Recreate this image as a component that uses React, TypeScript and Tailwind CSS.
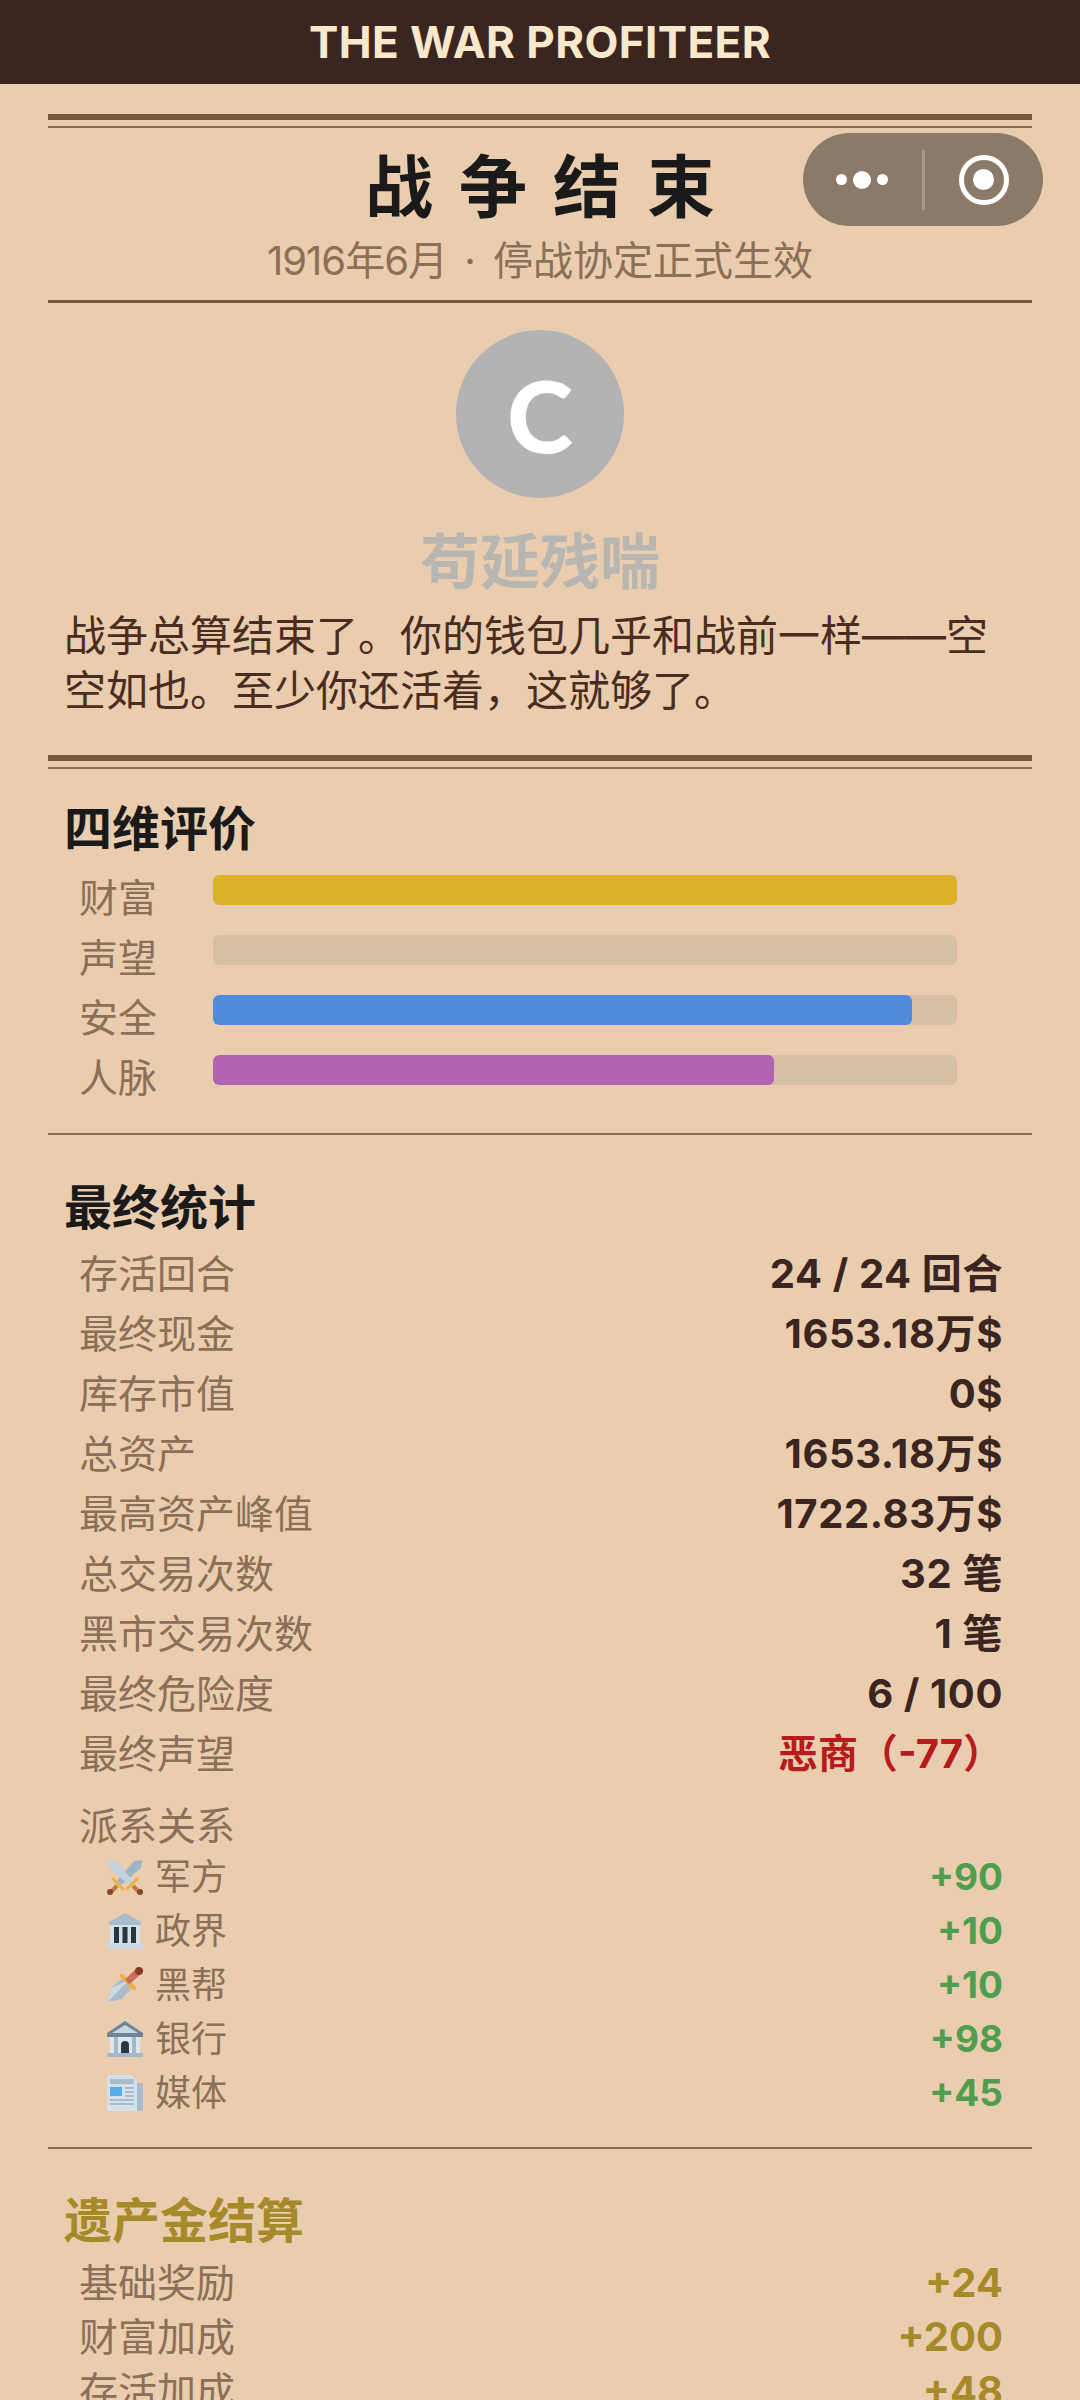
import React from 'react';

const cjk = { fontFamily: 'Inter, "Noto Sans CJK SC", sans-serif' };

const Swords = () => (
  <svg viewBox="0 0 36 36" className="w-[36px] h-[36px]">
    <path d="M35 1 L34 9 L14 26 L10 22 L27 2 Z" fill="#9fb4c4" />
    <path d="M1 1 L9 2 L26 22 L22 26 L2 9 Z" fill="#c3d2dd" />
    <path d="M6 20 L16 30 M30 20 L20 30" stroke="#f0b040" strokeWidth="3" strokeLinecap="round" />
    <path d="M10 27 L4 33 M26 27 L32 33" stroke="#c1764a" strokeWidth="4" />
    <circle cx="3" cy="33" r="3" fill="#8a4526" />
    <circle cx="33" cy="33" r="3" fill="#8a4526" />
  </svg>
);

const Classical = () => (
  <svg viewBox="0 0 36 36" className="w-[36px] h-[36px]">
    <path d="M18 0 L34 9 V12 H2 V9 Z" fill="#a9bccb" />
    <rect x="3" y="12" width="30" height="19" fill="#d5e0e8" />
    <rect x="7" y="14" width="5" height="16" fill="#2b3640" />
    <rect x="15.5" y="14" width="5" height="16" fill="#2b3640" />
    <rect x="24" y="14" width="5" height="16" fill="#2b3640" />
    <rect x="0" y="31" width="36" height="5" rx="1" fill="#ccd9e3" />
  </svg>
);

const Dagger = () => (
  <svg viewBox="0 0 36 36" className="w-[36px] h-[36px]">
    <path d="M1 35 L4 21 L18 9 L27 18 L15 32 Z" fill="#a9bccb" />
    <path d="M1 35 L4 21 L22 13 Z" fill="#ccd9e3" />
    <path d="M15 9 L27 21" stroke="#f0b040" strokeWidth="4" strokeLinecap="round" />
    <path d="M20 15 L32 4" stroke="#c9705a" strokeWidth="7" />
    <circle cx="32" cy="4" r="4" fill="#8a3d26" />
  </svg>
);

const Bank = () => (
  <svg viewBox="0 0 36 36" className="w-[36px] h-[36px]">
    <path d="M18 0 L36 12 V16 H0 V12 Z" fill="#6f8496" />
    <path d="M18 4 L31 12 H5 Z" fill="#c9d7e2" />
    <rect x="3" y="16" width="30" height="16" fill="#dce6ee" />
    <rect x="7" y="16" width="4" height="16" fill="#a5b8c7" />
    <rect x="25" y="16" width="4" height="16" fill="#a5b8c7" />
    <path d="M14 32 V24 a4 4 0 0 1 8 0 V32 Z" fill="#2b3640" />
    <rect x="0" y="32" width="36" height="4" rx="1" fill="#a5b8c7" />
  </svg>
);

const News = () => (
  <svg viewBox="0 0 36 36" className="w-[36px] h-[36px]">
    <rect x="28" y="8" width="8" height="28" rx="1" fill="#a9bccb" />
    <path d="M2 0 H24 L30 6 V36 H2 a2 2 0 0 1 -2 -2 V2 a2 2 0 0 1 2 -2 Z" fill="#d5e0e8" />
    <rect x="3" y="4" width="24" height="5" fill="#a9bccb" />
    <rect x="3" y="12" width="12" height="9" fill="#55aceb" />
    <path d="M18 13 H27 M18 17 H27 M18 21 H27 M3 25 H27 M3 29 H27" stroke="#a9bccb" strokeWidth="2" />
  </svg>
);

const DoubleRule = () => (
  <div>
    <div className="h-[6px] bg-[#76593f]" />
    <div className="h-[2px] mt-[6px] bg-[#8a6d52]" />
  </div>
);

const bars = [
  { label: '财富', value: 100, color: 'bg-[#dcb228]' },
  { label: '声望', value: 0, color: 'bg-[#d4bea3]' },
  { label: '安全', value: 94, color: 'bg-[#4f8cdb]' },
  { label: '人脉', value: 75.4, color: 'bg-[#b263b5]' },
];

const stats = [
  ['存活回合', '24 / 24 回合'],
  ['最终现金', '1653.18万$'],
  ['库存市值', '0$'],
  ['总资产', '1653.18万$'],
  ['最高资产峰值', '1722.83万$'],
  ['总交易次数', '32 笔'],
  ['黑市交易次数', '1 笔'],
  ['最终危险度', '6 / 100'],
];

const factions = [
  { icon: <Swords />, name: '军方', value: '+90' },
  { icon: <Classical />, name: '政界', value: '+10' },
  { icon: <Dagger />, name: '黑帮', value: '+10' },
  { icon: <Bank />, name: '银行', value: '+98' },
  { icon: <News />, name: '媒体', value: '+45' },
];

const legacy = [
  ['基础奖励', '+24'],
  ['财富加成', '+200'],
  ['存活加成', '+48'],
];

const App = () => {
  return (
    <div className="relative w-[1080px] h-[2400px] overflow-hidden bg-[#eacdaf]" style={cjk}>
      <header className="h-[84px] bg-[#3b2520] flex items-center justify-center">
        <span className="text-[44px] font-bold tracking-[0.4px] text-[#f8e8cc]">THE WAR PROFITEER</span>
      </header>

      {/* WeChat capsule */}
      <div className="absolute left-[803px] top-[133px] w-[240px] h-[93px] rounded-full bg-[#8c7a68] flex items-center">
        <div className="flex-1 flex items-center justify-center gap-[6px]">
          <span className="w-[11px] h-[11px] rounded-full bg-white" />
          <span className="w-[18px] h-[18px] rounded-full bg-white" />
          <span className="w-[11px] h-[11px] rounded-full bg-white" />
        </div>
        <div className="w-[3px] h-[60px] bg-[#ab9a88]" />
        <div className="flex-1 flex items-center justify-center">
          <div className="w-[50px] h-[50px] rounded-full border-[5px] border-white flex items-center justify-center">
            <div className="w-[21px] h-[21px] rounded-full bg-white" />
          </div>
        </div>
      </div>

      <main className="px-[48px] pt-[30px]">
        <DoubleRule />
        <h1 className="mt-[15px] text-center text-[68px] leading-[88px] font-bold tracking-[26px] pl-[26px] text-[#1a1a1a]">战争结束</h1>
        <p className="mt-[5px] text-center text-[40px] leading-[50px] text-[#8b6f56]">
          <span className="tracking-[-1px]">1916年6月</span>
          <span className="mx-[6px]"> · </span>
          停战协定正式生效
        </p>
        <div className="h-[3px] mt-[14px] bg-[#76593f]" />

        <div className="mt-[27px] flex justify-center">
          <div className="w-[168px] h-[168px] rounded-full bg-[#b3b3b3] flex items-center justify-center text-[100px] font-black text-white font-['Lato']">C</div>
        </div>
        <p className="mt-[28px] text-center text-[60px] leading-[72px] font-bold text-[#b8b6b0]">苟延残喘</p>
        <p className="mt-[10px] px-[16px] text-[42px] leading-[55px] text-[#4a2c20]">战争总算结束了。你的钱包几乎和战前一样——空空如也。至少你还活着，这就够了。</p>

        <div className="mt-[37px]"><DoubleRule /></div>

        <section className="px-[16px] pt-[30px] pb-[20px]">
          <h2 className="text-[48px] leading-[60px] font-bold text-[#1a1a1a]">四维评价</h2>
          <div className="mt-[14px]">
            {bars.map((b) => (
              <div key={b.label} className="flex items-start h-[60px] pl-[15px]">
                <span className="w-[134px] text-[39px] leading-[50px] text-[#8b6f56]">{b.label}</span>
                <div className="w-[744px] h-[30px] mt-[2px] rounded-[6px] bg-[#d6bfa3] overflow-hidden">
                  <div className={`h-full rounded-[6px] ${b.color}`} style={{ width: `${b.value}%` }} />
                </div>
              </div>
            ))}
          </div>
        </section>
        <div className="h-[2px] bg-[#8a6d52]" />

        <section className="px-[16px] pt-[43px] pb-[27px]">
          <h2 className="text-[48px] leading-[60px] font-bold text-[#1a1a1a]">最终统计</h2>
          <div className="mt-[6px] pl-[15px] pr-[13px]">
            {stats.map(([k, v]) => (
              <div key={k} className="flex items-center justify-between h-[60px]">
                <span className="text-[39px] text-[#8b6f56]">{k}</span>
                <span className="text-[40px] font-bold tracking-[0.6px] text-[#3b2520]">{v}</span>
              </div>
            ))}
            <div className="flex items-center justify-between h-[60px]">
              <span className="text-[39px] text-[#8b6f56]">最终声望</span>
              <span className="text-[40px] font-bold text-[#b71c1c]">恶商（-77）</span>
            </div>
            <div className="mt-[18px] h-[48px] flex items-center text-[39px] text-[#8b6f56]">派系关系</div>
            {factions.map((f) => (
              <div key={f.name} className="flex items-center justify-between h-[54px] pl-[28px]">
                <span className="flex items-center gap-[12px] text-[36px] text-[#8b6f56]">
                  {f.icon}
                  {f.name}
                </span>
                <span className="text-[37px] font-bold text-[#4f9e50]">{f.value}</span>
              </div>
            ))}
          </div>
        </section>
        <div className="h-[2px] bg-[#8a6d52]" />

        <section className="px-[16px] pt-[42px]">
          <h2 className="text-[48px] leading-[60px] font-bold text-[#a68a2a]">遗产金结算</h2>
          <div className="mt-[5px] pl-[15px] pr-[13px]">
            {legacy.map(([k, v]) => (
              <div key={k} className="flex items-center justify-between h-[54px]">
                <span className="text-[39px] text-[#8b6f56]">{k}</span>
                <span className="text-[40px] font-bold text-[#a68a2a]">{v}</span>
              </div>
            ))}
          </div>
        </section>
      </main>
    </div>
  );
};

export default App;
